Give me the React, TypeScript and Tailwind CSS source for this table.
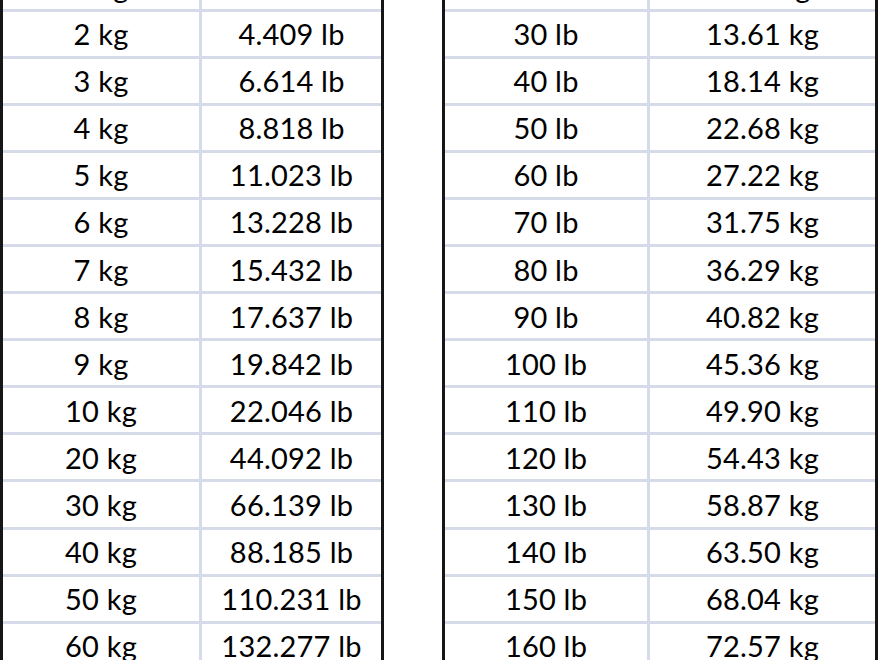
import React from 'react';

type Row = [string, string];

const kgRows: Row[] = [
  ['1 kg', '2.205 lb'],
  ['2 kg', '4.409 lb'],
  ['3 kg', '6.614 lb'],
  ['4 kg', '8.818 lb'],
  ['5 kg', '11.023 lb'],
  ['6 kg', '13.228 lb'],
  ['7 kg', '15.432 lb'],
  ['8 kg', '17.637 lb'],
  ['9 kg', '19.842 lb'],
  ['10 kg', '22.046 lb'],
  ['20 kg', '44.092 lb'],
  ['30 kg', '66.139 lb'],
  ['40 kg', '88.185 lb'],
  ['50 kg', '110.231 lb'],
  ['60 kg', '132.277 lb'],
];

const lbRows: Row[] = [
  ['20 lb', '9.07 kg'],
  ['30 lb', '13.61 kg'],
  ['40 lb', '18.14 kg'],
  ['50 lb', '22.68 kg'],
  ['60 lb', '27.22 kg'],
  ['70 lb', '31.75 kg'],
  ['80 lb', '36.29 kg'],
  ['90 lb', '40.82 kg'],
  ['100 lb', '45.36 kg'],
  ['110 lb', '49.90 kg'],
  ['120 lb', '54.43 kg'],
  ['130 lb', '58.87 kg'],
  ['140 lb', '63.50 kg'],
  ['150 lb', '68.04 kg'],
  ['160 lb', '72.57 kg'],
];

const Table = ({ rows, firstCol, width }: { rows: Row[]; firstCol: string; width: string }) => (
  <div className={`${width} shrink-0 border-x-[3px] border-[#161616]`}>
    {rows.map(([a, b]) => (
      <div key={a} className="flex h-[47.1px] border-b-[3px] border-[#d5dbe8]">
        <div className={`${firstCol} flex items-end justify-center border-r-[3px] border-[#d5dbe8] pb-[7.5px]`}>
          {a}
        </div>
        <div className="flex flex-1 items-end justify-center pb-[7.5px]">{b}</div>
      </div>
    ))}
  </div>
);

export default function App() {
  return (
    <div
      className="h-[660px] w-[880px] overflow-hidden bg-white text-[29px] leading-none tracking-[0.2px] text-black"
      style={{ fontFamily: 'Lato, "Open Sans", sans-serif' }}
    >
      <div className="mt-[-35.6px] flex">
        <Table rows={kgRows} firstCol="w-[199px]" width="w-[384px]" />
        <div className="w-[58px] shrink-0" />
        <Table rows={lbRows} firstCol="w-[205px]" width="w-[436px]" />
      </div>
    </div>
  );
}
